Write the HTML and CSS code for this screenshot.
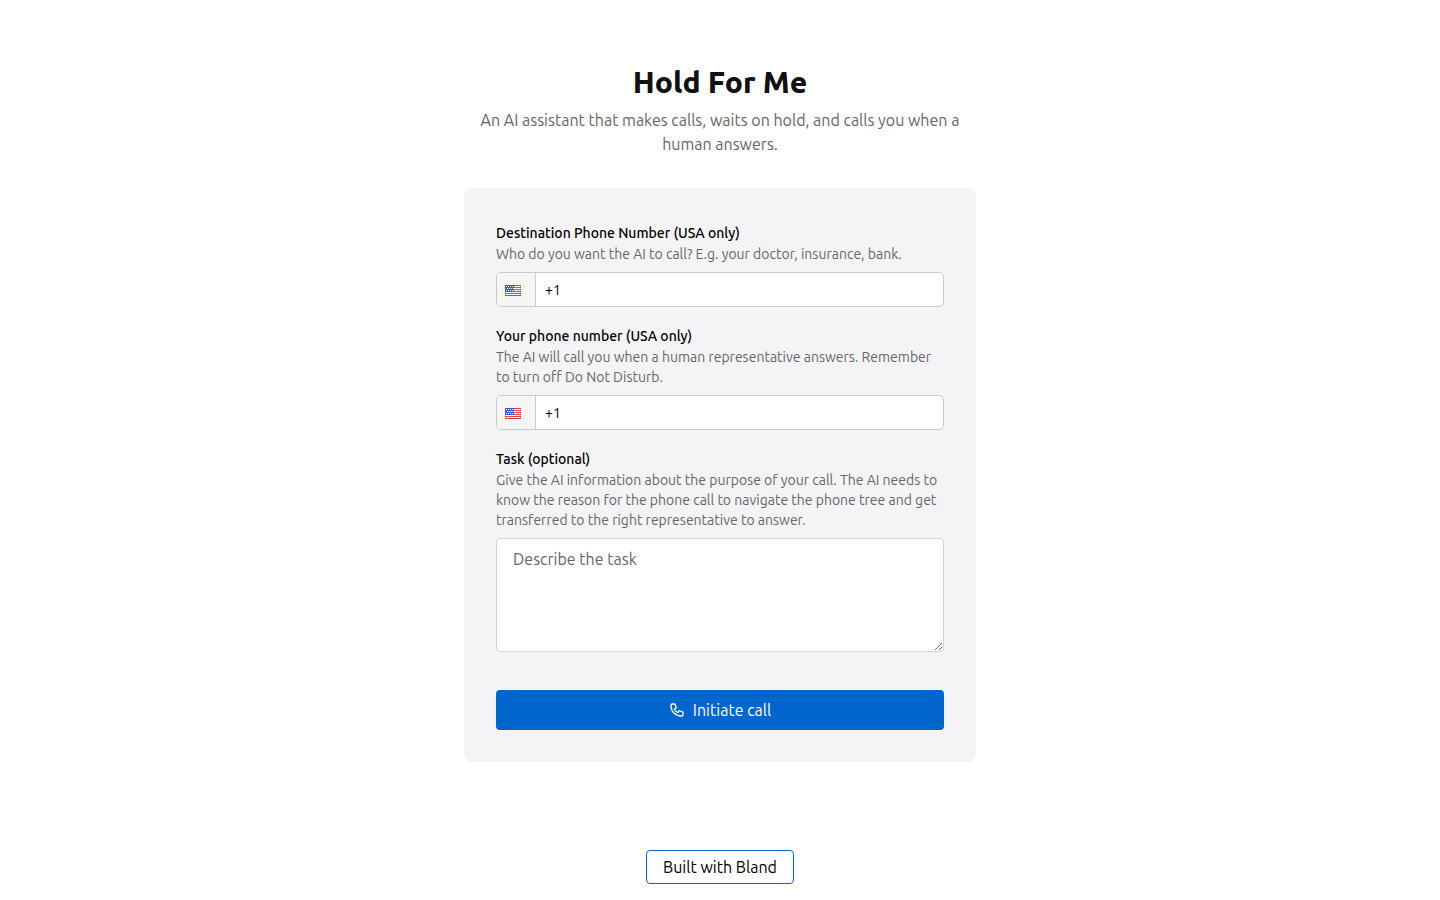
FILE: index.html
```html
<!DOCTYPE html>
<html lang="en">
<head>
  <meta charset="UTF-8">
  <meta name="viewport" content="width=device-width, initial-scale=1.0">
  <title>Hold For Me</title>
  <link rel="stylesheet" href="styles.css">
</head>
<body>
<svg class="sprite" aria-hidden="true">
  <symbol id="flag-us" viewBox="0 0 16 11">
    <rect width="16" height="11" fill="#fff"/>
    <path d="M0 .5h16M0 2.5h16M0 4.5h16M0 6.5h16M0 8.5h16M0 10.5h16" stroke="#f0403f"/>
    <rect width="9" height="7" fill="#2f62dc"/>
    <path d="M1 1.5h8M2 3.5h7M1 5.5h8" stroke="#fff" stroke-dasharray="1 1"/>
    <rect x=".5" y=".5" width="15" height="10" fill="none" stroke="#a33" stroke-opacity=".35"/>
  </symbol>
</svg>

<main class="page">
  <header class="intro">
    <h1>Hold For Me</h1>
    <p>An AI assistant that makes calls, waits on hold, and calls you when a human answers.</p>
  </header>

  <form class="card">
    <div class="field">
      <label for="destination">Destination Phone Number (USA only)</label>
      <p class="hint">Who do you want the AI to call? E.g. your doctor, insurance, bank.</p>
      <div class="phone">
        <button type="button" class="country" aria-label="United States"><svg class="flag"><use href="#flag-us"/></svg></button>
        <input type="tel" id="destination" value="+1">
      </div>
    </div>

    <div class="field">
      <label for="own-number">Your phone number (USA only)</label>
      <p class="hint">The AI will call you when a human representative answers. Remember to turn off Do Not Disturb.</p>
      <div class="phone">
        <button type="button" class="country" aria-label="United States"><svg class="flag"><use href="#flag-us"/></svg></button>
        <input type="tel" id="own-number" value="+1">
      </div>
    </div>

    <div class="field">
      <label for="task">Task (optional)</label>
      <p class="hint">Give the AI information about the purpose of your call. The AI needs to know the reason for the phone call to navigate the phone tree and get transferred to the right representative to answer.</p>
      <textarea id="task" placeholder="Describe the task"></textarea>
    </div>

    <button type="submit" class="submit">
      <svg class="icon" viewBox="0 0 24 24" fill="none" stroke="currentColor" stroke-width="2" stroke-linecap="round" stroke-linejoin="round"><path d="M3 5a2 2 0 0 1 2-2h3.28a1 1 0 0 1 .948.684l1.498 4.493a1 1 0 0 1-.502 1.21l-2.257 1.13a11.042 11.042 0 0 0 5.516 5.516l1.13-2.257a1 1 0 0 1 1.21-.502l4.493 1.498a1 1 0 0 1 .684.949V19a2 2 0 0 1-2 2h-1C9.716 21 3 14.284 3 6V5z"/></svg>
      Initiate call
    </button>
  </form>

  <footer class="footer">
    <a href="#" class="built">Built with Bland</a>
  </footer>
</main>
</body>
</html>
```
FILE: styles.css
```css
* {
  box-sizing: border-box;
}

body {
  margin: 0;
  background: #fff;
  color: #000;
  font-family: Ubuntu, "Noto Sans", sans-serif;
  font-size: 16px;
  line-height: 24px;
}

h1, p {
  margin: 0;
}

button, input, textarea {
  font: inherit;
}

.sprite {
  display: none;
}

.page {
  display: flex;
  flex-direction: column;
  align-items: center;
  min-height: 100vh;
  padding: 64px 16px 16px;
}

.intro {
  max-width: 512px;
  text-align: center;
  color: #666;
}

.intro h1 {
  margin-bottom: 8px;
  color: #111;
  font-size: 30px;
  font-weight: 800;
  line-height: 36px;
}

.card {
  display: flex;
  flex-direction: column;
  gap: 16px;
  width: 100%;
  max-width: 512px;
  margin-top: 32px;
  padding: 32px;
  background: #f4f4f6;
  border-radius: 8px;
}

.field {
  display: flex;
  flex-direction: column;
}

.field label {
  padding-top: 2px;
  font-size: 14px;
  font-weight: 500;
  line-height: 22px;
}

.hint {
  margin-bottom: 8px;
  color: #666;
  font-size: 14px;
  line-height: 20px;
}

.phone {
  display: flex;
  height: 35px;
  border: 1px solid #cacaca;
  border-radius: 5px;
  background: #fff;
  overflow: hidden;
}

.country {
  display: flex;
  align-items: center;
  width: 39px;
  padding: 1px 8px 0;
  border: 0;
  border-right: 1px solid #cacaca;
  background: #f5f5f5;
}

.flag {
  width: 16px;
  height: 11px;
}

.phone input {
  flex: 1;
  min-width: 0;
  padding: 0 9px;
  border: 0;
  background: none;
  font-size: 14px;
}

.field textarea {
  height: 114px;
  padding: 8px 16px;
  border: 1px solid #d4d4d8;
  border-radius: 4px;
  background: #fff;
  resize: vertical;
}

.field textarea::placeholder {
  color: #666;
}

.submit {
  display: flex;
  align-items: center;
  justify-content: center;
  gap: 8px;
  height: 40px;
  margin-top: 22px;
  border: 0;
  border-radius: 4px;
  background: #06c;
  color: #fff;
}

.icon {
  width: 16px;
  height: 16px;
}

.footer {
  margin-top: auto;
}

.built {
  display: block;
  padding: 4px 16px;
  border: 1px solid #06c;
  border-radius: 4px;
  color: #000;
  text-decoration: none;
}
```
